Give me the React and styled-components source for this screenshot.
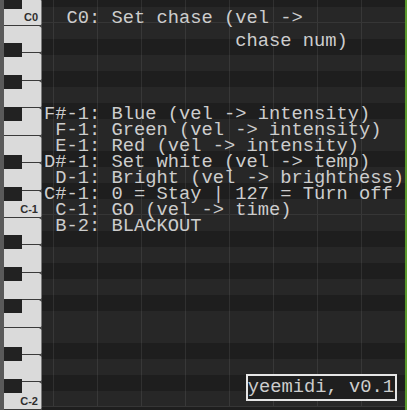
import React from "react";
import styled, { createGlobalStyle } from "styled-components";

const ROW = 16;
const TOP = -6;
const WHITE_KEY = (ROW * 12) / 7;

const GlobalStyle = createGlobalStyle`
  html, body {
    margin: 0;
    padding: 0;
    background: #1e1e1e;
  }
`;

const Screen = styled.div`
  display: flex;
  width: 407px;
  height: 410px;
  overflow: hidden;
  background: #1e1e1e;
`;

const Strip = styled.div`
  width: 4px;
  flex-shrink: 0;
  background: #5a5a5a;
`;

const Piano = styled.div`
  position: relative;
  width: 37px;
  flex-shrink: 0;
  margin-top: ${TOP}px;
  border-right: 1px solid #7a7a7a;
  background: #dadada;
`;

const WhiteKey = styled.div`
  position: relative;
  box-sizing: border-box;
  height: ${(p) => p.$h}px;
  display: flex;
  align-items: flex-end;
  justify-content: flex-end;
  padding: 0 3px 2px 0;
  border-bottom: 1px solid #3a3a3a;
  font-family: "Liberation Sans", Arial, sans-serif;
  font-weight: bold;
  font-size: 11px;
  line-height: 11px;
  color: #2e2e2e;

  &::after {
    content: "";
    position: absolute;
    right: -1px;
    bottom: -3px;
    border-style: solid;
    border-width: 2.5px 3px 2.5px 0;
    border-color: transparent #4a4a4a transparent transparent;
  }
`;

const BlackKey = styled.div`
  position: absolute;
  left: 0;
  width: 18px;
  height: 14px;
  background: #222;
`;

const Roll = styled.div`
  position: relative;
  flex: 1;
  border-right: 2px solid #5b9a2c;
`;

const Rows = styled.div`
  margin-top: ${TOP}px;
`;

const Row = styled.div`
  height: ${ROW}px;
  padding-left: 2px;
  background-color: ${(p) => (p.$black ? "#1e1e1e" : "#272727")};
  background-image: linear-gradient(
    to right,
    rgba(255, 255, 255, 0.08) 0 1px,
    transparent 1px
  );
  background-size: 44px 100%;
  background-position: 11px 0;
  box-shadow: ${(p) => (p.$octave ? "inset 0 -1px 0 #363636" : "none")};
  font-family: "Liberation Mono", "Courier New", monospace;
  font-size: 18.75px;
  line-height: 23px;
  color: #cdcdcd;
  white-space: pre;
`;

const Wrapped = styled.div`
  margin-top: -3px;
  line-height: 22.5px;
`;

const Badge = styled.div`
  position: absolute;
  right: 8px;
  bottom: 9px;
  padding: 0 1px 0 0;
  border: 2px solid #e6e6e6;
  background: #1f1f1f;
  font-family: "Liberation Mono", "Courier New", monospace;
  font-size: 18.75px;
  line-height: 23px;
  color: #cdcdcd;
  white-space: pre;
`;

const NAMES = ["B", "A#", "A", "G#", "G", "F#", "F", "E", "D#", "D", "C#", "C"];

// rows from C#0 at the top down to C-2
const rows = [];
for (let i = 0; i < 26; i++) {
  const n = (i + 10) % 12;
  const name = i < 2 ? (i === 0 ? "C#0" : "C0") : NAMES[n] + (i <= 13 ? "-1" : "-2");
  rows.push({ name, black: name.includes("#"), octave: NAMES[n] === "C" });
}

const mapping = {
  "F#-1": "F#-1: Blue (vel -> intensity)",
  "F-1": " F-1: Green (vel -> intensity)",
  "E-1": " E-1: Red (vel -> intensity)",
  "D#-1": "D#-1: Set white (vel -> temp)",
  "D-1": " D-1: Bright (vel -> brightness)",
  "C#-1": "C#-1: 0 = Stay | 127 = Turn off",
  "C-1": " C-1: GO (vel -> time)",
  "B-2": " B-2: BLACKOUT",
};

const whiteKeys = [
  { h: 4.57, label: "" },
  { h: WHITE_KEY, label: "C0" },
  ...["B", "A", "G", "F", "E", "D"].map(() => ({ h: WHITE_KEY, label: "" })),
  { h: WHITE_KEY, label: "C-1" },
  ...["B", "A", "G", "F", "E", "D"].map(() => ({ h: WHITE_KEY, label: "" })),
  { h: WHITE_KEY, label: "C-2" },
];

function App() {
  return (
    <Screen>
      <GlobalStyle />
      <Strip />
      <Piano>
        {whiteKeys.map((k, i) => (
          <WhiteKey key={i} $h={k.h}>
            {k.label}
          </WhiteKey>
        ))}
        {rows.map((r, i) =>
          r.black ? <BlackKey key={r.name} style={{ top: i * ROW + 1 }} /> : null
        )}
      </Piano>
      <Roll>
        <Rows>
          {rows.map((r) => (
            <Row key={r.name} $black={r.black} $octave={r.octave}>
              {r.name === "C0" ? (
                <Wrapped>
                  {"  C0: Set chase (vel ->\n                 chase num)"}
                </Wrapped>
              ) : (
                mapping[r.name] || ""
              )}
            </Row>
          ))}
        </Rows>
        <Badge>yeemidi, v0.1</Badge>
      </Roll>
    </Screen>
  );
}

export default App;
